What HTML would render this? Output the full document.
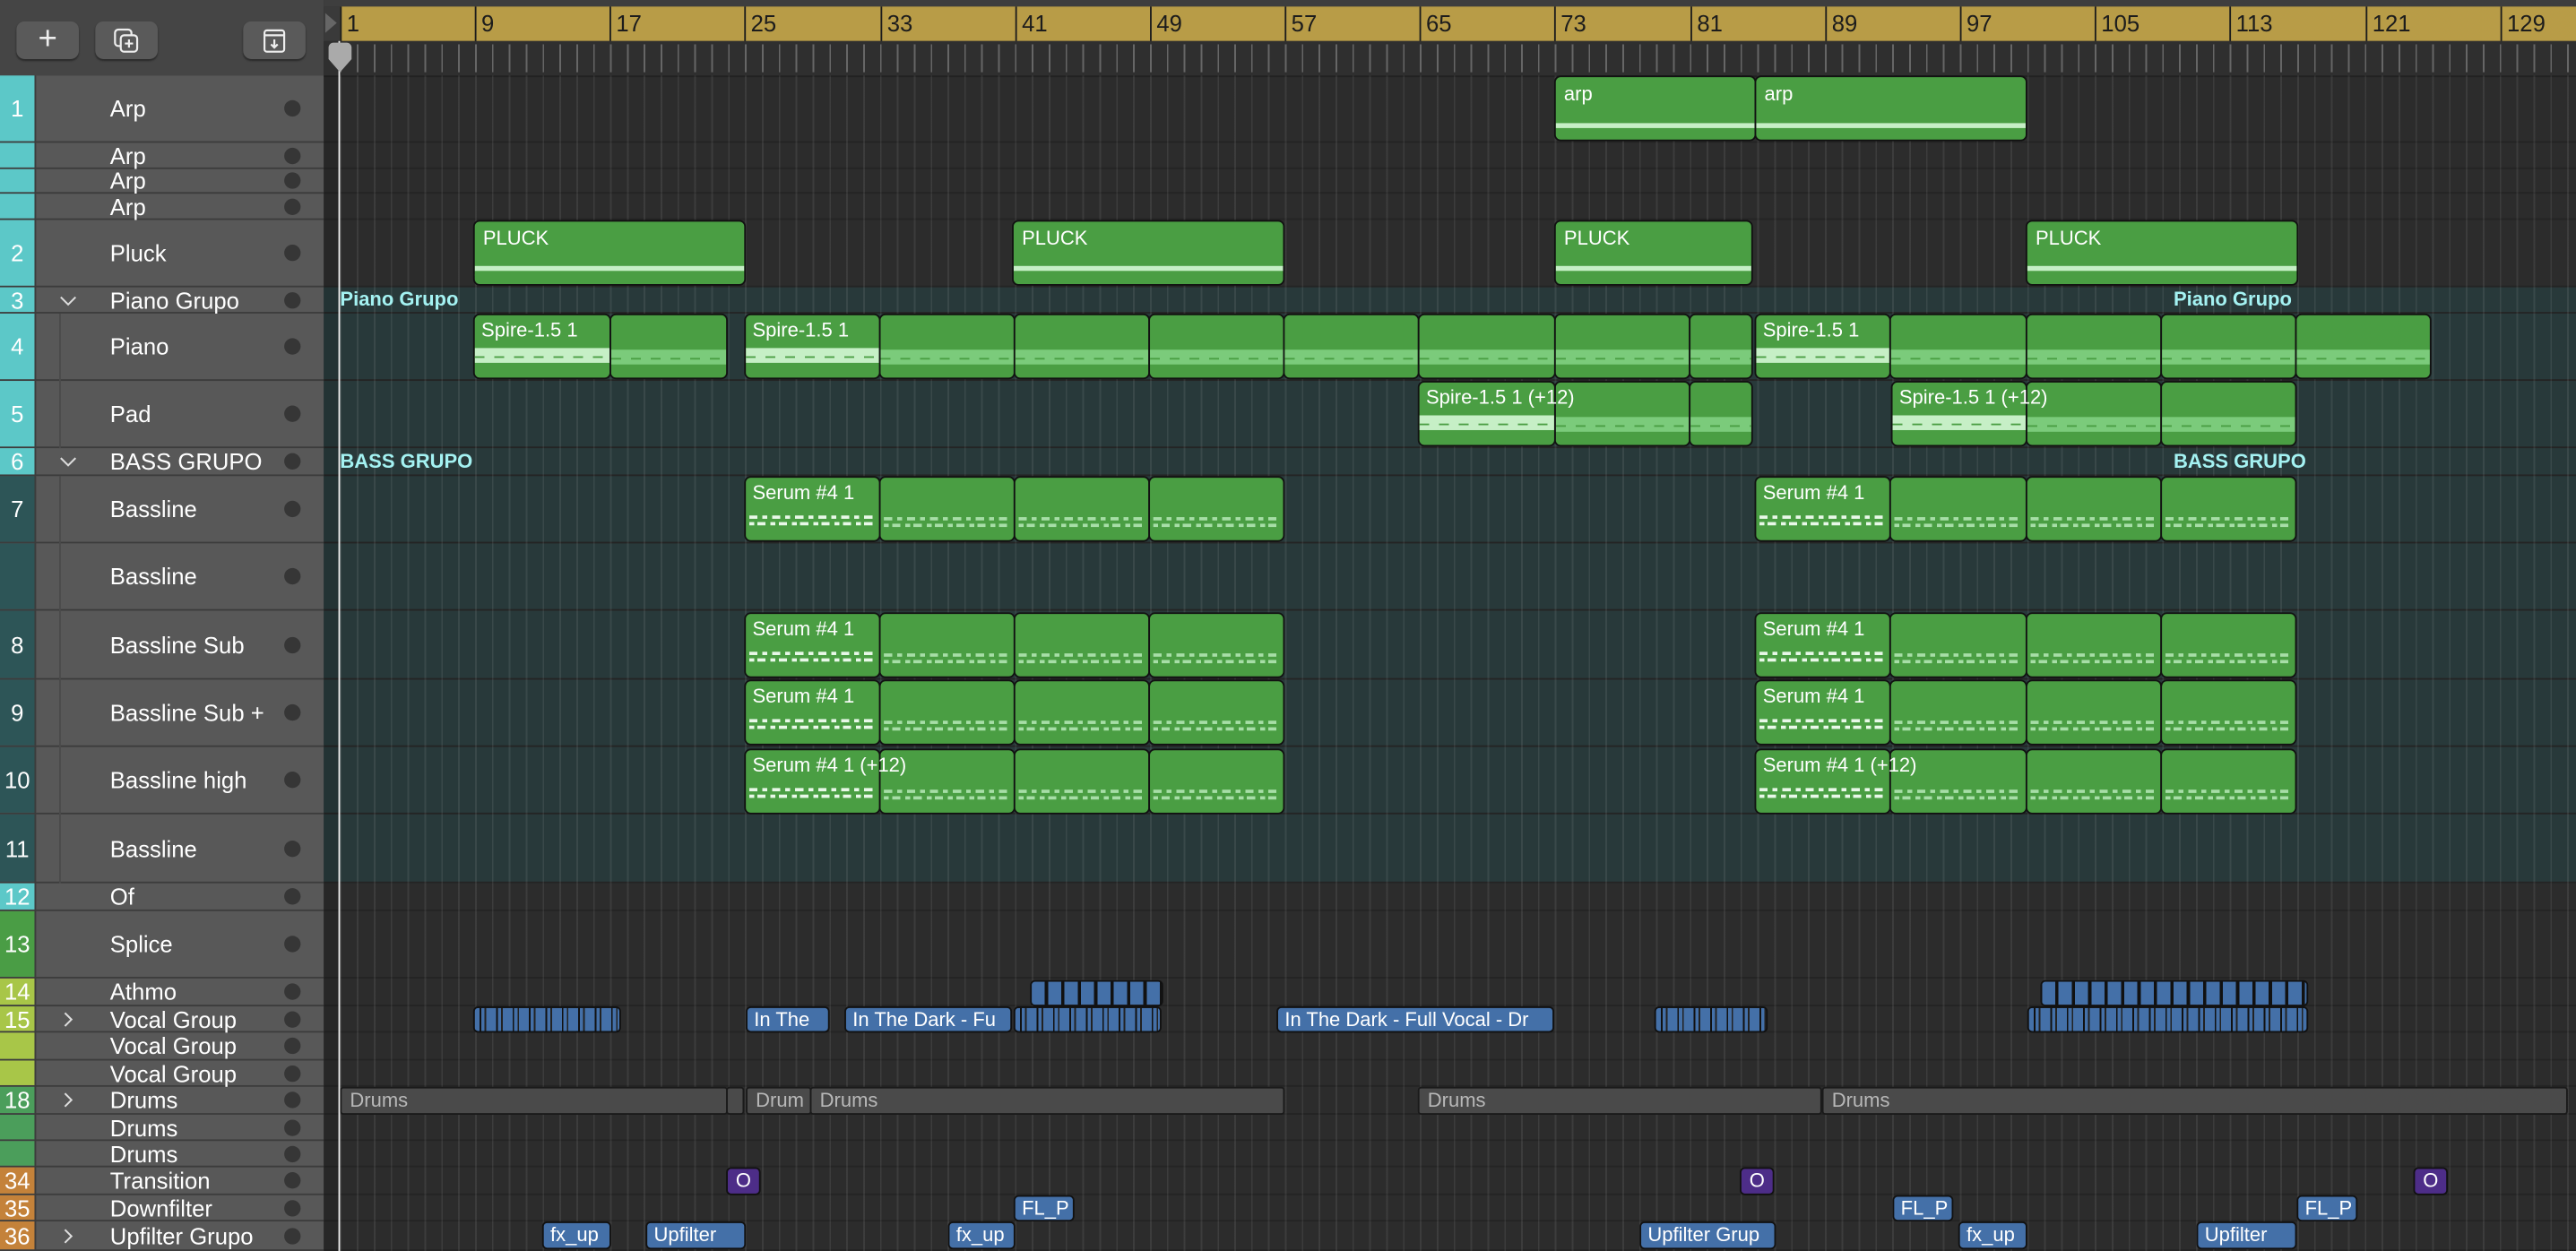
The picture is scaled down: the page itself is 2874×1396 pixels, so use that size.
<!DOCTYPE html>
<html><head><meta charset="utf-8"><style>
html,body{margin:0;padding:0;background:#2c2c2c;width:2874px;height:1396px;overflow:hidden}
#s{position:relative;width:1568px;height:762px;transform:scale(1.83291,1.83202);transform-origin:0 0;font-family:"Liberation Sans",sans-serif;overflow:hidden;background:#2c2c2c}
.a{position:absolute}
.tr{position:absolute;left:0;width:197px;background:#585858;border-bottom:1px solid #3c3c3c;box-sizing:border-box}
.n{position:absolute;left:0;top:0;bottom:0;width:21px;color:#fff;font-size:14px;display:flex;align-items:center;justify-content:center}
.nm{position:absolute;left:67px;top:0;bottom:0;display:flex;align-items:center;color:#fff;font-size:14px;white-space:nowrap}
.dot{position:absolute;left:173px;top:50%;width:10px;height:10px;margin-top:-5px;border-radius:50%;background:#363636}
.ch{position:absolute;left:36px;top:50%;margin-top:-5px;width:11px;height:10px}
.ind{position:absolute;left:36px;top:0;bottom:-1px;border-left:1px solid #4a4a4a}
.row{position:absolute;left:197px;right:0;border-bottom:1px solid #242424;box-sizing:border-box}
.r{position:absolute;box-sizing:border-box;border:1px solid #111;border-radius:4px;overflow:hidden;white-space:nowrap;color:#fff;font-size:12px;padding-left:5px}
.g{background:#4a9e43}
.g.lb{overflow:visible;z-index:2;background:transparent;border:none}
.g.lb .in{position:absolute;inset:0;background:#4a9e43;border:1px solid #111;border-radius:4px;overflow:hidden}
.g .t{position:absolute;left:5px;top:3px;z-index:3}
.b{background:#4470a8;line-height:14px;padding-left:4px;border-radius:3px}
.p{background:#4d2d88;text-align:center;padding:0;line-height:15px;border-radius:3px}
.dr{background:#4a4a4a;color:#b8b8b8;border:1px solid #1a1a1a;border-radius:2px;line-height:15px;font-size:12px;padding-left:5px}
.st{background:repeating-linear-gradient(90deg,#4470a8 0 3px,#111 3px 4px,#4470a8 4px 6px,#222 6px 7px,#4470a8 7px 10px)}
.band{position:absolute;left:0;right:0;height:9px;background:#7bcb7b}
.band.hi{background:#c6efc6}
.band:after{content:"";position:absolute;left:0;right:0;top:5px;height:1px;background:repeating-linear-gradient(90deg,#4a9e43 0 6px,transparent 6px 12px)}
.ser{position:absolute;left:2px;right:2px;height:6px;background:repeating-linear-gradient(90deg,#a7dea7 0 5px,transparent 5px 8px,#a7dea7 8px 11px,transparent 11px 14px) 0 0/100% 2px no-repeat,repeating-linear-gradient(90deg,#a7dea7 0 3px,transparent 3px 5px,#a7dea7 5px 10px,transparent 10px 13px) 0 4px/100% 2px no-repeat}
.ser.hi{background:repeating-linear-gradient(90deg,#e8f8e8 0 5px,transparent 5px 8px,#e8f8e8 8px 11px,transparent 11px 14px) 0 0/100% 2px no-repeat,repeating-linear-gradient(90deg,#e8f8e8 0 3px,transparent 3px 5px,#e8f8e8 5px 10px,transparent 10px 13px) 0 4px/100% 2px no-repeat}
.btn{position:absolute;top:13px;width:38px;height:23px;background:#5a5a5a;border-radius:5px;box-shadow:0 1px 1px #2a2a2a;color:#eee;display:flex;align-items:center;justify-content:center}
.rn{position:absolute;top:4px;font-size:14px;color:#1c1c1c;border-left:1px solid #1c1c1c;padding-left:3px;height:21px;line-height:21px}
.gl{position:absolute;color:#a4f2f2;font-weight:bold;font-size:12px}
</style></head><body><div id="s">
<div class="a" style="left:0;top:0;width:197px;height:46px;background:#454545;border-bottom:1px solid #333"></div>
<div class="a" style="left:197px;top:0;right:0;height:4px;background:#3e3e3e"></div>
<div class="btn" style="left:10px;font-size:20px;font-weight:300">+</div>
<div class="btn" style="left:58px"><svg width="16" height="16" viewBox="0 0 16 16" fill="none" stroke="#eee" stroke-width="1.2"><rect x="1" y="1" width="10" height="10" rx="2"/><rect x="4.5" y="4.5" width="10" height="10" rx="2" fill="#5a5a5a"/><path d="M9.5 7v5M7 9.5h5"/></svg></div>
<div class="btn" style="left:148px"><svg width="16" height="16" viewBox="0 0 16 16" fill="none" stroke="#eee" stroke-width="1.2"><rect x="2" y="1.5" width="12" height="13" rx="1.5"/><path d="M2 4.5h12M8 7v5M6 10l2 2 2-2"/></svg></div>
<div class="a" style="left:197px;top:4px;width:10px;height:21px;background:#3a3a3a"></div>
<div class="a" style="left:198px;top:8px;width:0;height:0;border-top:6px solid transparent;border-bottom:6px solid transparent;border-left:7px solid #666"></div>
<div class="a" style="left:207px;top:4px;right:0;height:21px;background:#b89c47"></div>
<div class="a" style="left:197px;top:25px;right:0;height:21px;background:#2f2f2f;border-bottom:1px solid #222"></div>
<div class="a" style="left:207px;top:27px;right:0;height:17px;background:repeating-linear-gradient(90deg,#666 0 1px,transparent 1px 10.27px)"></div>
<div class="rn" style="left:207px">1</div><div class="rn" style="left:289px">9</div><div class="rn" style="left:371px">17</div><div class="rn" style="left:453px">25</div><div class="rn" style="left:536px">33</div><div class="rn" style="left:618px">41</div><div class="rn" style="left:700px">49</div><div class="rn" style="left:782px">57</div><div class="rn" style="left:864px">65</div><div class="rn" style="left:946px">73</div><div class="rn" style="left:1029px">81</div><div class="rn" style="left:1111px">89</div><div class="rn" style="left:1193px">97</div><div class="rn" style="left:1275px">105</div><div class="rn" style="left:1357px">113</div><div class="rn" style="left:1440px">121</div><div class="rn" style="left:1522px">129</div>
<div class="row" style="top:46px;height:41px"></div>
<div class="row" style="top:87px;height:16px"></div>
<div class="row" style="top:103px;height:15px"></div>
<div class="row" style="top:118px;height:16px"></div>
<div class="row" style="top:134px;height:41px"></div>
<div class="row" style="top:175px;height:363px;background:#28393a"></div>
<div class="row" style="top:190px;height:1px"></div>
<div class="row" style="top:231px;height:1px"></div>
<div class="row" style="top:272px;height:1px"></div>
<div class="row" style="top:289px;height:1px"></div>
<div class="row" style="top:330px;height:1px"></div>
<div class="row" style="top:371px;height:1px"></div>
<div class="row" style="top:413px;height:1px"></div>
<div class="row" style="top:454px;height:1px"></div>
<div class="row" style="top:495px;height:1px"></div>
<div class="row" style="top:538px;height:17px"></div>
<div class="row" style="top:555px;height:41px"></div>
<div class="row" style="top:596px;height:17px"></div>
<div class="row" style="top:613px;height:16px"></div>
<div class="row" style="top:629px;height:17px"></div>
<div class="row" style="top:646px;height:16px"></div>
<div class="row" style="top:662px;height:17px"></div>
<div class="row" style="top:679px;height:16px"></div>
<div class="row" style="top:695px;height:16px"></div>
<div class="row" style="top:711px;height:17px"></div>
<div class="row" style="top:728px;height:16px"></div>
<div class="row" style="top:744px;height:18px"></div>
<div class="a" style="left:207px;top:46px;right:0;bottom:0;background:repeating-linear-gradient(90deg,rgba(255,255,255,0.08) 0 1px,transparent 1px 10.27px)"></div>
<div class="a" style="left:197px;top:46px;width:10px;bottom:0;background:rgba(0,0,0,0.1)"></div>
<div class="gl" style="left:207px;top:175px">Piano Grupo</div>
<div class="gl" style="left:1323px;top:175px">Piano Grupo</div>
<div class="gl" style="left:207px;top:274px">BASS GRUPO</div>
<div class="gl" style="left:1323px;top:274px">BASS GRUPO</div>
<div class="r g" style="left:946px;top:46px;width:123px;height:40px"><span class="t">arp</span><div class="band" style="top:28px;height:3px;background:#c6efc6"></div></div>
<div class="r g" style="left:1068px;top:46px;width:166px;height:40px"><span class="t">arp</span><div class="band" style="top:28px;height:3px;background:#c6efc6"></div></div>
<div class="r g" style="left:288px;top:134px;width:166px;height:40px"><span class="t">PLUCK</span><div class="band" style="top:27px;height:3px;background:#c6efc6"></div></div>
<div class="r g" style="left:616px;top:134px;width:166px;height:40px"><span class="t">PLUCK</span><div class="band" style="top:27px;height:3px;background:#c6efc6"></div></div>
<div class="r g" style="left:946px;top:134px;width:121px;height:40px"><span class="t">PLUCK</span><div class="band" style="top:27px;height:3px;background:#c6efc6"></div></div>
<div class="r g" style="left:1233px;top:134px;width:166px;height:40px"><span class="t">PLUCK</span><div class="band" style="top:27px;height:3px;background:#c6efc6"></div></div>
<!-- piano -->
<div class="r g" style="left:371px;top:191px;width:72px;height:40px"><div class="band" style="top:21px"></div></div>
<div class="r g" style="left:535px;top:191px;width:83px;height:40px"><div class="band" style="top:21px"></div></div>
<div class="r g" style="left:617px;top:191px;width:83px;height:40px"><div class="band" style="top:21px"></div></div>
<div class="r g" style="left:699px;top:191px;width:83px;height:40px"><div class="band" style="top:21px"></div></div>
<div class="r g" style="left:781px;top:191px;width:83px;height:40px"><div class="band" style="top:21px"></div></div>
<div class="r g" style="left:863px;top:191px;width:84px;height:40px"><div class="band" style="top:21px"></div></div>
<div class="r g" style="left:946px;top:191px;width:83px;height:40px"><div class="band" style="top:21px"></div></div>
<div class="r g" style="left:1028px;top:191px;width:39px;height:40px"><div class="band" style="top:21px"></div></div>
<div class="r g" style="left:1150px;top:191px;width:84px;height:40px"><div class="band" style="top:21px"></div></div>
<div class="r g" style="left:1233px;top:191px;width:83px;height:40px"><div class="band" style="top:21px"></div></div>
<div class="r g" style="left:1315px;top:191px;width:83px;height:40px"><div class="band" style="top:21px"></div></div>
<div class="r g" style="left:1397px;top:191px;width:83px;height:40px"><div class="band" style="top:21px"></div></div>
<div class="r g lb" style="left:288px;top:191px;width:84px;height:40px"><div class="in"><div class="band hi" style="top:20px"></div></div><span class="t">Spire-1.5 1</span></div>
<div class="r g lb" style="left:453px;top:191px;width:83px;height:40px"><div class="in"><div class="band hi" style="top:20px"></div></div><span class="t">Spire-1.5 1</span></div>
<div class="r g lb" style="left:1068px;top:191px;width:83px;height:40px"><div class="in"><div class="band hi" style="top:20px"></div></div><span class="t">Spire-1.5 1</span></div>
<!-- pad -->
<div class="r g" style="left:946px;top:232px;width:83px;height:40px"><div class="band" style="top:21px"></div></div>
<div class="r g" style="left:1028px;top:232px;width:39px;height:40px"><div class="band" style="top:21px"></div></div>
<div class="r g" style="left:1233px;top:232px;width:83px;height:40px"><div class="band" style="top:21px"></div></div>
<div class="r g" style="left:1315px;top:232px;width:83px;height:40px"><div class="band" style="top:21px"></div></div>
<div class="r g lb" style="left:863px;top:232px;width:84px;height:40px"><div class="in"><div class="band hi" style="top:20px"></div></div><span class="t">Spire-1.5 1 (+12)</span></div>
<div class="r g lb" style="left:1151px;top:232px;width:83px;height:40px"><div class="in"><div class="band hi" style="top:20px"></div></div><span class="t">Spire-1.5 1 (+12)</span></div>
<!-- serum -->
<div class="r g" style="left:535px;top:290px;width:83px;height:40px"><div class="ser" style="top:24px"></div></div>
<div class="r g" style="left:617px;top:290px;width:83px;height:40px"><div class="ser" style="top:24px"></div></div>
<div class="r g" style="left:699px;top:290px;width:83px;height:40px"><div class="ser" style="top:24px"></div></div>
<div class="r g" style="left:1150px;top:290px;width:84px;height:40px"><div class="ser" style="top:24px"></div></div>
<div class="r g" style="left:1233px;top:290px;width:83px;height:40px"><div class="ser" style="top:24px"></div></div>
<div class="r g" style="left:1315px;top:290px;width:83px;height:40px"><div class="ser" style="top:24px"></div></div>
<div class="r g lb" style="left:453px;top:290px;width:83px;height:40px"><div class="in"><div class="ser hi" style="top:23px"></div></div><span class="t">Serum #4 1</span></div>
<div class="r g lb" style="left:1068px;top:290px;width:83px;height:40px"><div class="in"><div class="ser hi" style="top:23px"></div></div><span class="t">Serum #4 1</span></div>

<div class="r g" style="left:535px;top:373px;width:83px;height:40px"><div class="ser" style="top:24px"></div></div>
<div class="r g" style="left:617px;top:373px;width:83px;height:40px"><div class="ser" style="top:24px"></div></div>
<div class="r g" style="left:699px;top:373px;width:83px;height:40px"><div class="ser" style="top:24px"></div></div>
<div class="r g" style="left:1150px;top:373px;width:84px;height:40px"><div class="ser" style="top:24px"></div></div>
<div class="r g" style="left:1233px;top:373px;width:83px;height:40px"><div class="ser" style="top:24px"></div></div>
<div class="r g" style="left:1315px;top:373px;width:83px;height:40px"><div class="ser" style="top:24px"></div></div>
<div class="r g lb" style="left:453px;top:373px;width:83px;height:40px"><div class="in"><div class="ser hi" style="top:23px"></div></div><span class="t">Serum #4 1</span></div>
<div class="r g lb" style="left:1068px;top:373px;width:83px;height:40px"><div class="in"><div class="ser hi" style="top:23px"></div></div><span class="t">Serum #4 1</span></div>

<div class="r g" style="left:535px;top:414px;width:83px;height:40px"><div class="ser" style="top:24px"></div></div>
<div class="r g" style="left:617px;top:414px;width:83px;height:40px"><div class="ser" style="top:24px"></div></div>
<div class="r g" style="left:699px;top:414px;width:83px;height:40px"><div class="ser" style="top:24px"></div></div>
<div class="r g" style="left:1150px;top:414px;width:84px;height:40px"><div class="ser" style="top:24px"></div></div>
<div class="r g" style="left:1233px;top:414px;width:83px;height:40px"><div class="ser" style="top:24px"></div></div>
<div class="r g" style="left:1315px;top:414px;width:83px;height:40px"><div class="ser" style="top:24px"></div></div>
<div class="r g lb" style="left:453px;top:414px;width:83px;height:40px"><div class="in"><div class="ser hi" style="top:23px"></div></div><span class="t">Serum #4 1</span></div>
<div class="r g lb" style="left:1068px;top:414px;width:83px;height:40px"><div class="in"><div class="ser hi" style="top:23px"></div></div><span class="t">Serum #4 1</span></div>

<div class="r g" style="left:535px;top:456px;width:83px;height:40px"><div class="ser" style="top:24px"></div></div>
<div class="r g" style="left:617px;top:456px;width:83px;height:40px"><div class="ser" style="top:24px"></div></div>
<div class="r g" style="left:699px;top:456px;width:83px;height:40px"><div class="ser" style="top:24px"></div></div>
<div class="r g" style="left:1150px;top:456px;width:84px;height:40px"><div class="ser" style="top:24px"></div></div>
<div class="r g" style="left:1233px;top:456px;width:83px;height:40px"><div class="ser" style="top:24px"></div></div>
<div class="r g" style="left:1315px;top:456px;width:83px;height:40px"><div class="ser" style="top:24px"></div></div>
<div class="r g lb" style="left:453px;top:456px;width:83px;height:40px"><div class="in"><div class="ser hi" style="top:23px"></div></div><span class="t">Serum #4 1 (+12)</span></div>
<div class="r g lb" style="left:1068px;top:456px;width:83px;height:40px"><div class="in"><div class="ser hi" style="top:23px"></div></div><span class="t">Serum #4 1 (+12)</span></div>
<!-- athmo -->
<div class="r b" style="left:627px;top:597px;width:81px;height:16px;background:repeating-linear-gradient(90deg,#4470a8 0 8px,#111 8px 10px)"></div>
<div class="r b" style="left:1242px;top:597px;width:163px;height:16px;background:repeating-linear-gradient(90deg,#4470a8 0 8px,#111 8px 10px)"></div>
<div class="r b st" style="left:288px;top:613px;width:90px;height:16px"></div>
<div class="r b" style="left:454px;top:613px;width:51px;height:16px">In The</div>
<div class="r b" style="left:514px;top:613px;width:102px;height:16px">In The Dark - Fu</div>
<div class="r b st" style="left:617px;top:613px;width:90px;height:16px"></div>
<div class="r b" style="left:777px;top:613px;width:169px;height:16px">In The Dark - Full Vocal - Dr</div>
<div class="r b st" style="left:1007px;top:613px;width:69px;height:16px"></div>
<div class="r b st" style="left:1234px;top:613px;width:171px;height:16px"></div>
<div class="r dr" style="left:207px;top:662px;width:236px;height:17px">Drums</div>
<div class="r dr" style="left:442px;top:662px;width:11px;height:17px"></div>
<div class="r dr" style="left:454px;top:662px;width:40px;height:17px">Drum</div>
<div class="r dr" style="left:493px;top:662px;width:289px;height:17px">Drums</div>
<div class="r dr" style="left:863px;top:662px;width:246px;height:17px">Drums</div>
<div class="r dr" style="left:1109px;top:662px;width:454px;height:17px">Drums</div>
<div class="r p" style="left:442px;top:711px;width:21px;height:17px">O</div>
<div class="r p" style="left:1059px;top:711px;width:21px;height:17px">O</div>
<div class="r p" style="left:1469px;top:711px;width:21px;height:17px">O</div>
<div class="r b" style="left:617px;top:728px;width:37px;height:16px">FL_P</div>
<div class="r b" style="left:1152px;top:728px;width:37px;height:16px">FL_P</div>
<div class="r b" style="left:1398px;top:728px;width:37px;height:16px">FL_P</div>
<div class="r b" style="left:330px;top:744px;width:42px;height:17px">fx_up</div>
<div class="r b" style="left:393px;top:744px;width:61px;height:17px">Upfilter</div>
<div class="r b" style="left:577px;top:744px;width:41px;height:17px">fx_up</div>
<div class="r b" style="left:998px;top:744px;width:83px;height:17px">Upfilter Grup</div>
<div class="r b" style="left:1192px;top:744px;width:42px;height:17px">fx_up</div>
<div class="r b" style="left:1337px;top:744px;width:61px;height:17px">Upfilter</div>
<div class="a" style="left:206px;top:25px;width:1px;bottom:0;background:#eee;z-index:5"></div>
<div class="a" style="left:200px;top:26px;width:14px;height:10px;background:#aaa;border-radius:3px 3px 0 0;z-index:5"></div>
<div class="a" style="left:200px;top:36px;width:0;height:0;border-left:7px solid transparent;border-right:7px solid transparent;border-top:8px solid #aaa;z-index:5"></div>
<!-- track list -->
<div class="tr" style="top:46px;height:41px"><div class="n" style="background:#5cc8c8">1</div><div class="nm">Arp</div><div class="dot"></div></div>
<div class="tr" style="top:87px;height:16px"><div class="n" style="background:#5cc8c8"></div><div class="nm">Arp</div><div class="dot"></div></div>
<div class="tr" style="top:103px;height:15px"><div class="n" style="background:#5cc8c8"></div><div class="nm">Arp</div><div class="dot"></div></div>
<div class="tr" style="top:118px;height:16px"><div class="n" style="background:#5cc8c8"></div><div class="nm">Arp</div><div class="dot"></div></div>
<div class="tr" style="top:134px;height:41px"><div class="n" style="background:#5cc8c8">2</div><div class="nm">Pluck</div><div class="dot"></div></div>
<div class="tr" style="top:175px;height:16px"><div class="n" style="background:#5cc8c8">3</div><svg class="ch" viewBox="0 0 11 10"><polyline points="1,3 5.5,7.5 10,3" fill="none" stroke="#ddd" stroke-width="1.1"/></svg><div class="nm">Piano Grupo</div><div class="dot"></div></div>
<div class="tr" style="top:191px;height:41px"><div class="n" style="background:#5cc8c8">4</div><div class="ind"></div><div class="nm">Piano</div><div class="dot"></div></div>
<div class="tr" style="top:232px;height:41px"><div class="n" style="background:#5cc8c8">5</div><div class="ind"></div><div class="nm">Pad</div><div class="dot"></div></div>
<div class="tr" style="top:273px;height:17px"><div class="n" style="background:#5cc8c8">6</div><svg class="ch" viewBox="0 0 11 10"><polyline points="1,3 5.5,7.5 10,3" fill="none" stroke="#ddd" stroke-width="1.1"/></svg><div class="nm">BASS GRUPO</div><div class="dot"></div></div>
<div class="tr" style="top:290px;height:41px"><div class="n" style="background:#2d5557">7</div><div class="ind"></div><div class="nm">Bassline</div><div class="dot"></div></div>
<div class="tr" style="top:331px;height:41px"><div class="n" style="background:#2d5557"></div><div class="ind"></div><div class="nm">Bassline</div><div class="dot"></div></div>
<div class="tr" style="top:372px;height:42px"><div class="n" style="background:#2d5557">8</div><div class="ind"></div><div class="nm">Bassline Sub</div><div class="dot"></div></div>
<div class="tr" style="top:414px;height:41px"><div class="n" style="background:#2d5557">9</div><div class="ind"></div><div class="nm">Bassline Sub +</div><div class="dot"></div></div>
<div class="tr" style="top:455px;height:41px"><div class="n" style="background:#2d5557">10</div><div class="ind"></div><div class="nm">Bassline high</div><div class="dot"></div></div>
<div class="tr" style="top:496px;height:42px"><div class="n" style="background:#2d5557">11</div><div class="ind"></div><div class="nm">Bassline</div><div class="dot"></div></div>
<div class="tr" style="top:538px;height:17px"><div class="n" style="background:#5cc8c8">12</div><div class="nm">Of</div><div class="dot"></div></div>
<div class="tr" style="top:555px;height:41px"><div class="n" style="background:#4a9d45">13</div><div class="nm">Splice</div><div class="dot"></div></div>
<div class="tr" style="top:596px;height:17px"><div class="n" style="background:#a8c648">14</div><div class="nm">Athmo</div><div class="dot"></div></div>
<div class="tr" style="top:613px;height:16px"><div class="n" style="background:#a8c648">15</div><svg class="ch" viewBox="0 0 11 10"><polyline points="3.5,1 7.5,5 3.5,9" fill="none" stroke="#ddd" stroke-width="1.1"/></svg><div class="nm">Vocal Group</div><div class="dot"></div></div>
<div class="tr" style="top:629px;height:17px"><div class="n" style="background:#a8c648"></div><div class="nm">Vocal Group</div><div class="dot"></div></div>
<div class="tr" style="top:646px;height:16px"><div class="n" style="background:#a8c648"></div><div class="nm">Vocal Group</div><div class="dot"></div></div>
<div class="tr" style="top:662px;height:17px"><div class="n" style="background:#4b9e5b">18</div><svg class="ch" viewBox="0 0 11 10"><polyline points="3.5,1 7.5,5 3.5,9" fill="none" stroke="#ddd" stroke-width="1.1"/></svg><div class="nm">Drums</div><div class="dot"></div></div>
<div class="tr" style="top:679px;height:16px"><div class="n" style="background:#4b9e5b"></div><div class="nm">Drums</div><div class="dot"></div></div>
<div class="tr" style="top:695px;height:16px"><div class="n" style="background:#4b9e5b"></div><div class="nm">Drums</div><div class="dot"></div></div>
<div class="tr" style="top:711px;height:17px"><div class="n" style="background:#c4823a">34</div><div class="nm">Transition</div><div class="dot"></div></div>
<div class="tr" style="top:728px;height:16px"><div class="n" style="background:#c4823a">35</div><div class="nm">Downfilter</div><div class="dot"></div></div>
<div class="tr" style="top:744px;height:18px"><div class="n" style="background:#c4823a">36</div><svg class="ch" viewBox="0 0 11 10"><polyline points="3.5,1 7.5,5 3.5,9" fill="none" stroke="#ddd" stroke-width="1.1"/></svg><div class="nm">Upfilter Grupo</div><div class="dot"></div></div>
<div class="a" style="left:21px;top:46px;width:1px;bottom:0;background:#3c3c3c"></div>
</div></body></html>
